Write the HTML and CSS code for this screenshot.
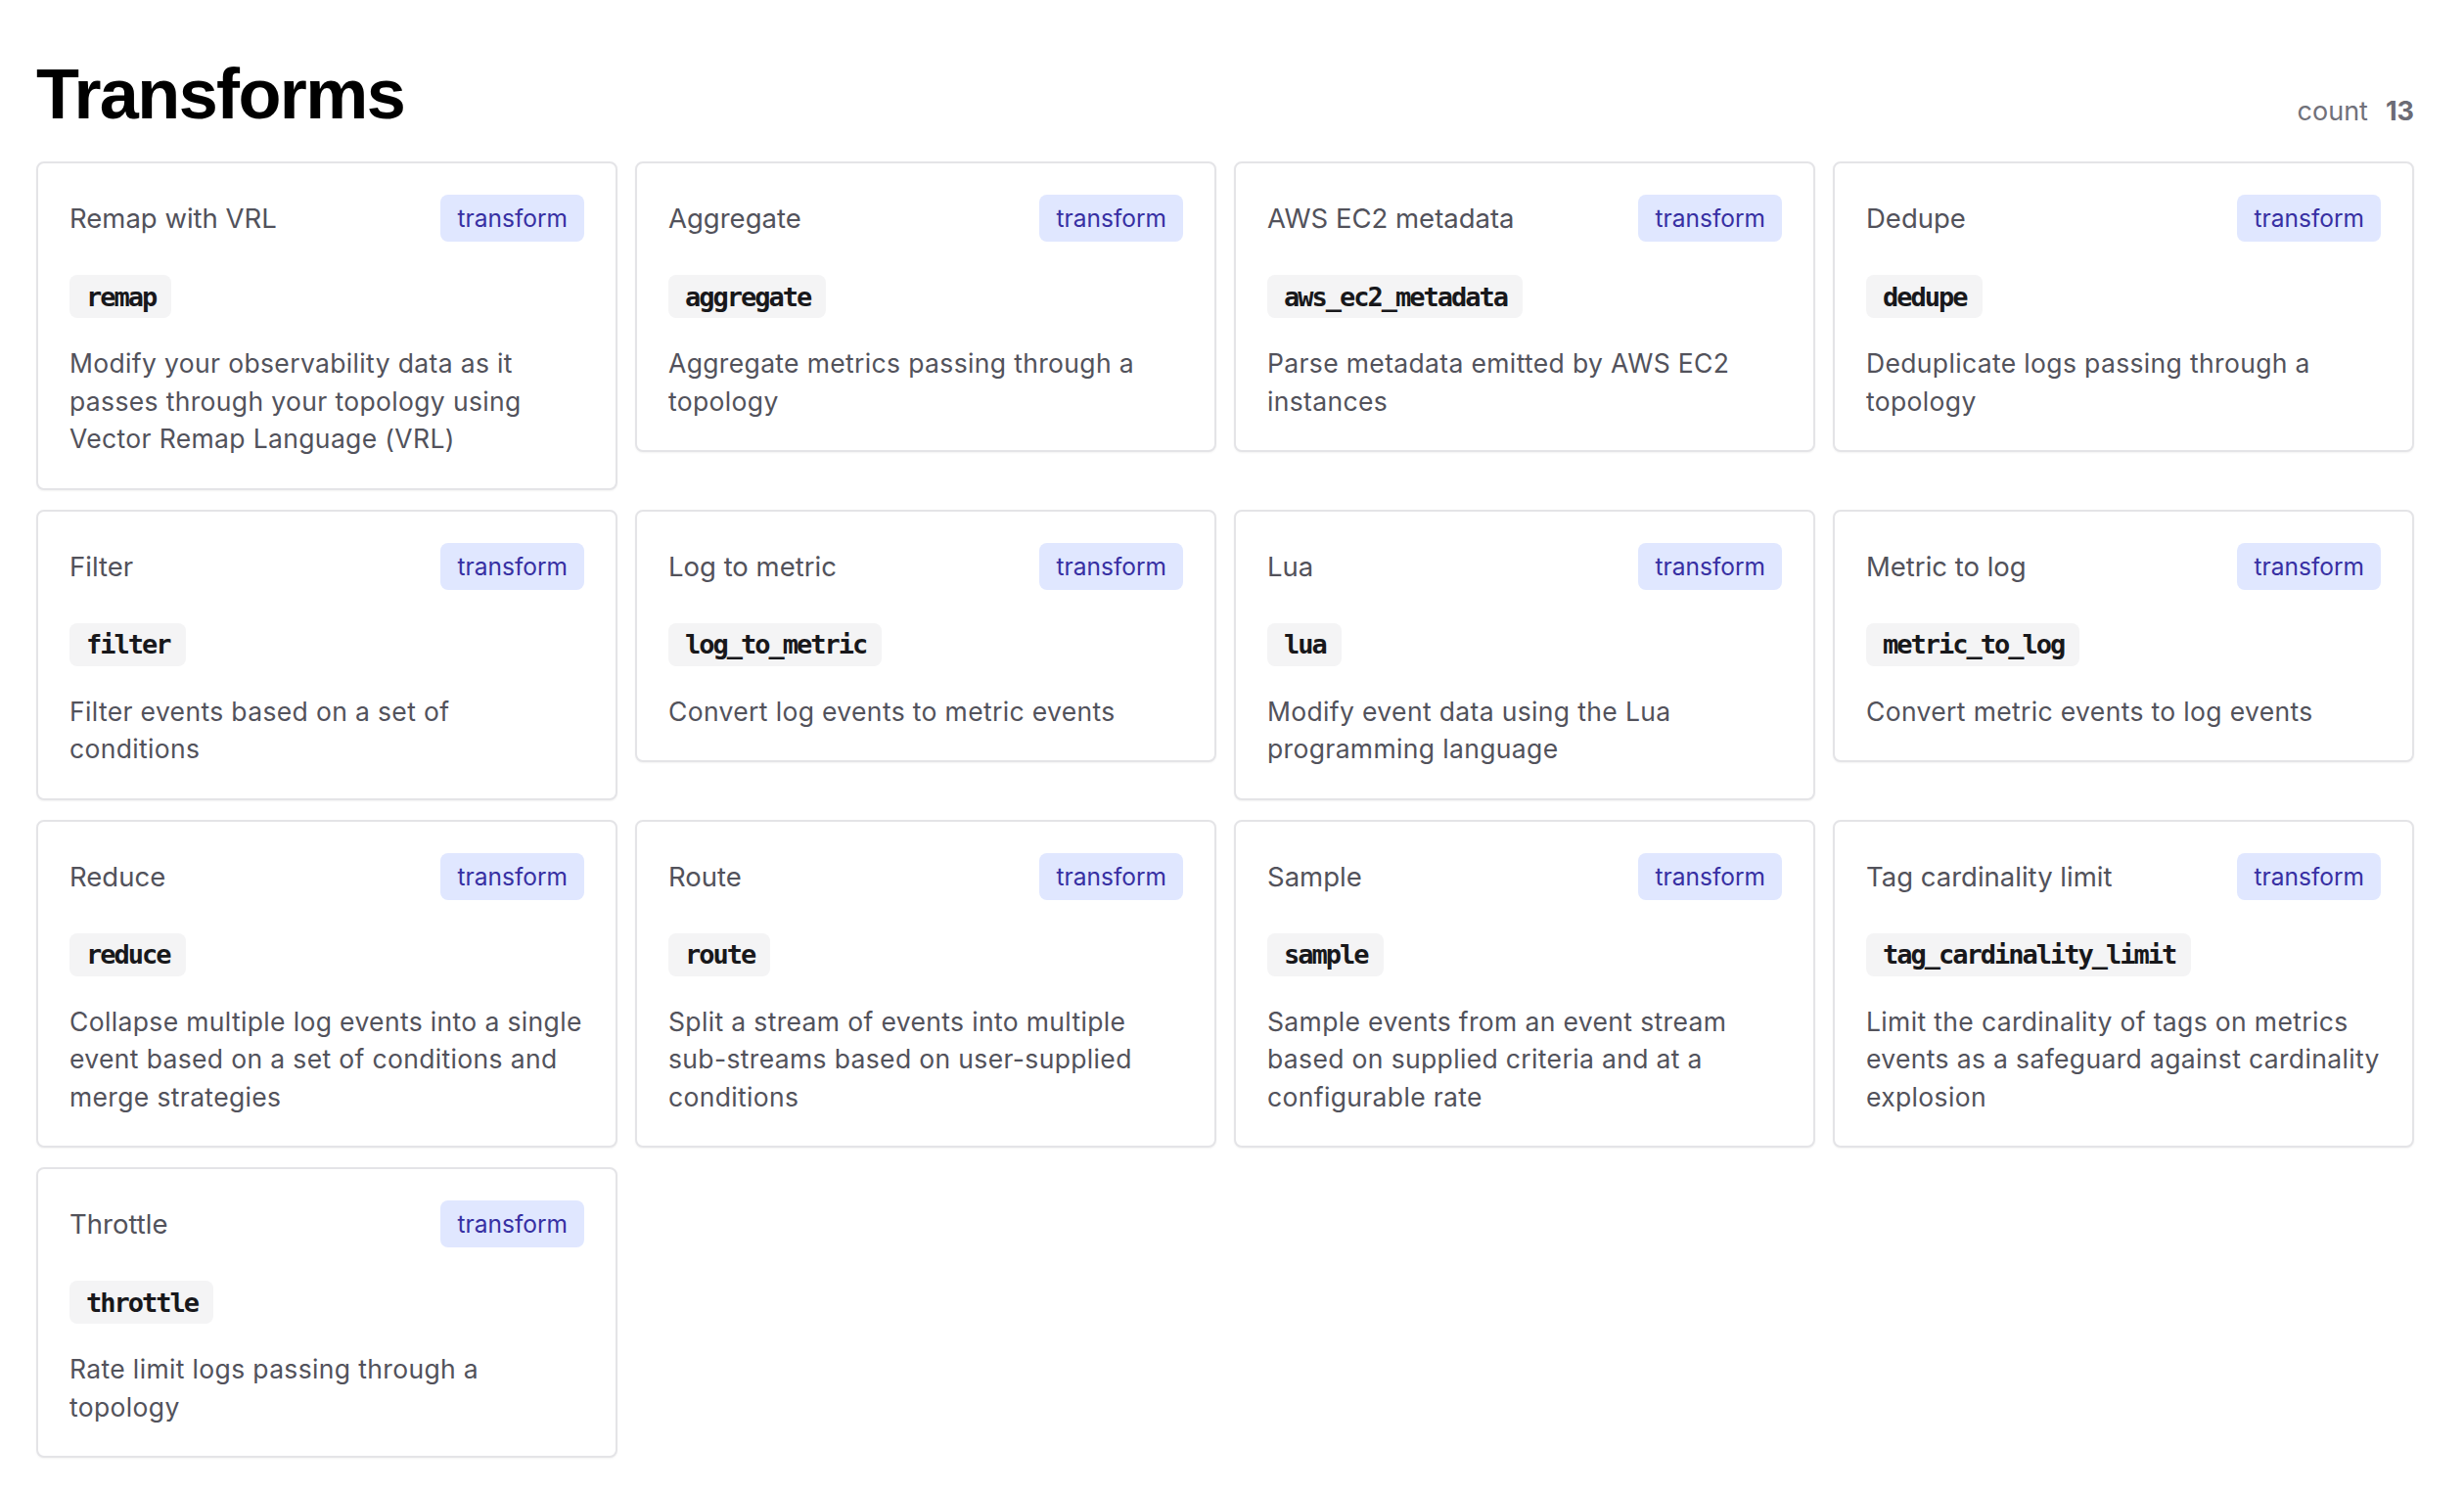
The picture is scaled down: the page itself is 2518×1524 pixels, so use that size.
FILE: index.html
```html
<!DOCTYPE html>
<html lang="en">
<head>
<meta charset="utf-8">
<title>Transforms</title>
<link rel="stylesheet" href="styles.css">
</head>
<body>
<main class="page">
  <header class="page-head">
    <h1 class="page-title">Transforms</h1>
    <div class="count"><span class="count-label">count</span><span class="count-num">13</span></div>
  </header>
  <section class="grid">
    <article class="card">
      <div class="card-head"><span class="card-title">Remap with VRL</span><span class="badge">transform</span></div>
      <div class="code-row"><code class="pill">remap</code></div>
      <p class="desc">Modify your observability data as it passes through your topology using Vector Remap Language (VRL)</p>
    </article>
    <article class="card">
      <div class="card-head"><span class="card-title">Aggregate</span><span class="badge">transform</span></div>
      <div class="code-row"><code class="pill">aggregate</code></div>
      <p class="desc">Aggregate metrics passing through a topology</p>
    </article>
    <article class="card">
      <div class="card-head"><span class="card-title">AWS EC2 metadata</span><span class="badge">transform</span></div>
      <div class="code-row"><code class="pill">aws_ec2_metadata</code></div>
      <p class="desc">Parse metadata emitted by AWS EC2 instances</p>
    </article>
    <article class="card">
      <div class="card-head"><span class="card-title">Dedupe</span><span class="badge">transform</span></div>
      <div class="code-row"><code class="pill">dedupe</code></div>
      <p class="desc">Deduplicate logs passing through a topology</p>
    </article>
    <article class="card">
      <div class="card-head"><span class="card-title">Filter</span><span class="badge">transform</span></div>
      <div class="code-row"><code class="pill">filter</code></div>
      <p class="desc">Filter events based on a set of conditions</p>
    </article>
    <article class="card">
      <div class="card-head"><span class="card-title">Log to metric</span><span class="badge">transform</span></div>
      <div class="code-row"><code class="pill">log_to_metric</code></div>
      <p class="desc">Convert log events to metric events</p>
    </article>
    <article class="card">
      <div class="card-head"><span class="card-title">Lua</span><span class="badge">transform</span></div>
      <div class="code-row"><code class="pill">lua</code></div>
      <p class="desc">Modify event data using the Lua programming language</p>
    </article>
    <article class="card">
      <div class="card-head"><span class="card-title">Metric to log</span><span class="badge">transform</span></div>
      <div class="code-row"><code class="pill">metric_to_log</code></div>
      <p class="desc">Convert metric events to log events</p>
    </article>
    <article class="card">
      <div class="card-head"><span class="card-title">Reduce</span><span class="badge">transform</span></div>
      <div class="code-row"><code class="pill">reduce</code></div>
      <p class="desc">Collapse multiple log events into a single event based on a set of conditions and merge strategies</p>
    </article>
    <article class="card">
      <div class="card-head"><span class="card-title">Route</span><span class="badge">transform</span></div>
      <div class="code-row"><code class="pill">route</code></div>
      <p class="desc">Split a stream of events into multiple sub-streams based on user-supplied conditions</p>
    </article>
    <article class="card">
      <div class="card-head"><span class="card-title">Sample</span><span class="badge">transform</span></div>
      <div class="code-row"><code class="pill">sample</code></div>
      <p class="desc">Sample events from an event stream based on supplied criteria and at a configurable rate</p>
    </article>
    <article class="card">
      <div class="card-head"><span class="card-title">Tag cardinality limit</span><span class="badge">transform</span></div>
      <div class="code-row"><code class="pill">tag_cardinality_limit</code></div>
      <p class="desc">Limit the cardinality of tags on metrics events as a safeguard against cardinality explosion</p>
    </article>
    <article class="card">
      <div class="card-head"><span class="card-title">Throttle</span><span class="badge">transform</span></div>
      <div class="code-row"><code class="pill">throttle</code></div>
      <p class="desc">Rate limit logs passing through a topology</p>
    </article>
  </section>
</main>
</body>
</html>
```

FILE: styles.css
```css
* { box-sizing: border-box; }

html, body {
  margin: 0;
  padding: 0;
  background: #ffffff;
}

body {
  font-family: Inter, "Noto Sans", "Liberation Sans", sans-serif;
  color: #52525b;
}

.page {
  padding: 60px 51px 40px 37px;
}

.page-head {
  display: flex;
  justify-content: space-between;
  align-items: flex-end;
  margin-bottom: 33px;
}

.page-title {
  margin: 0;
  font-family: "Liberation Sans", Arial, sans-serif;
  font-weight: 700;
  font-size: 72px;
  line-height: 72px;
  letter-spacing: -1.6px;
  color: #000000;
}

.count {
  display: flex;
  gap: 18px;
  font-size: 27px;
  line-height: 36px;
  color: #71717a;
}

.count-num {
  font-weight: 700;
  color: #6b6b75;
}

.grid {
  display: grid;
  grid-template-columns: repeat(4, 1fr);
  column-gap: 18px;
  row-gap: 20px;
  align-items: start;
}

.card {
  border: 2px solid #e4e4e7;
  border-radius: 8px;
  padding: 32px 32px 31px;
  background: #ffffff;
  box-shadow: 0 1px 2px rgba(0, 0, 0, 0.05);
}

.card-head {
  display: flex;
  justify-content: space-between;
  align-items: center;
  height: 48px;
}

.card-title {
  font-size: 27.5px;
  color: #52525b;
}

.badge {
  display: inline-flex;
  align-items: center;
  height: 48px;
  padding: 0 17px;
  border-radius: 8px;
  background: #e0e7ff;
  color: #3730a3;
  font-size: 24.5px;
}

.code-row {
  margin-top: 34px;
  display: flex;
}

.pill {
  display: inline-flex;
  align-items: center;
  height: 44px;
  padding: 0 16px 0 17px;
  border-radius: 8px;
  background: #f4f4f5;
  color: #18181b;
  font-family: "DejaVu Sans Mono", "Liberation Mono", monospace;
  font-weight: 700;
  font-size: 27px;
  letter-spacing: -2px;
}

.desc {
  margin: 27px 0 0;
  font-size: 26.5px;
  line-height: 38.5px;
  letter-spacing: 0.35px;
  color: #52525b;
}
```
